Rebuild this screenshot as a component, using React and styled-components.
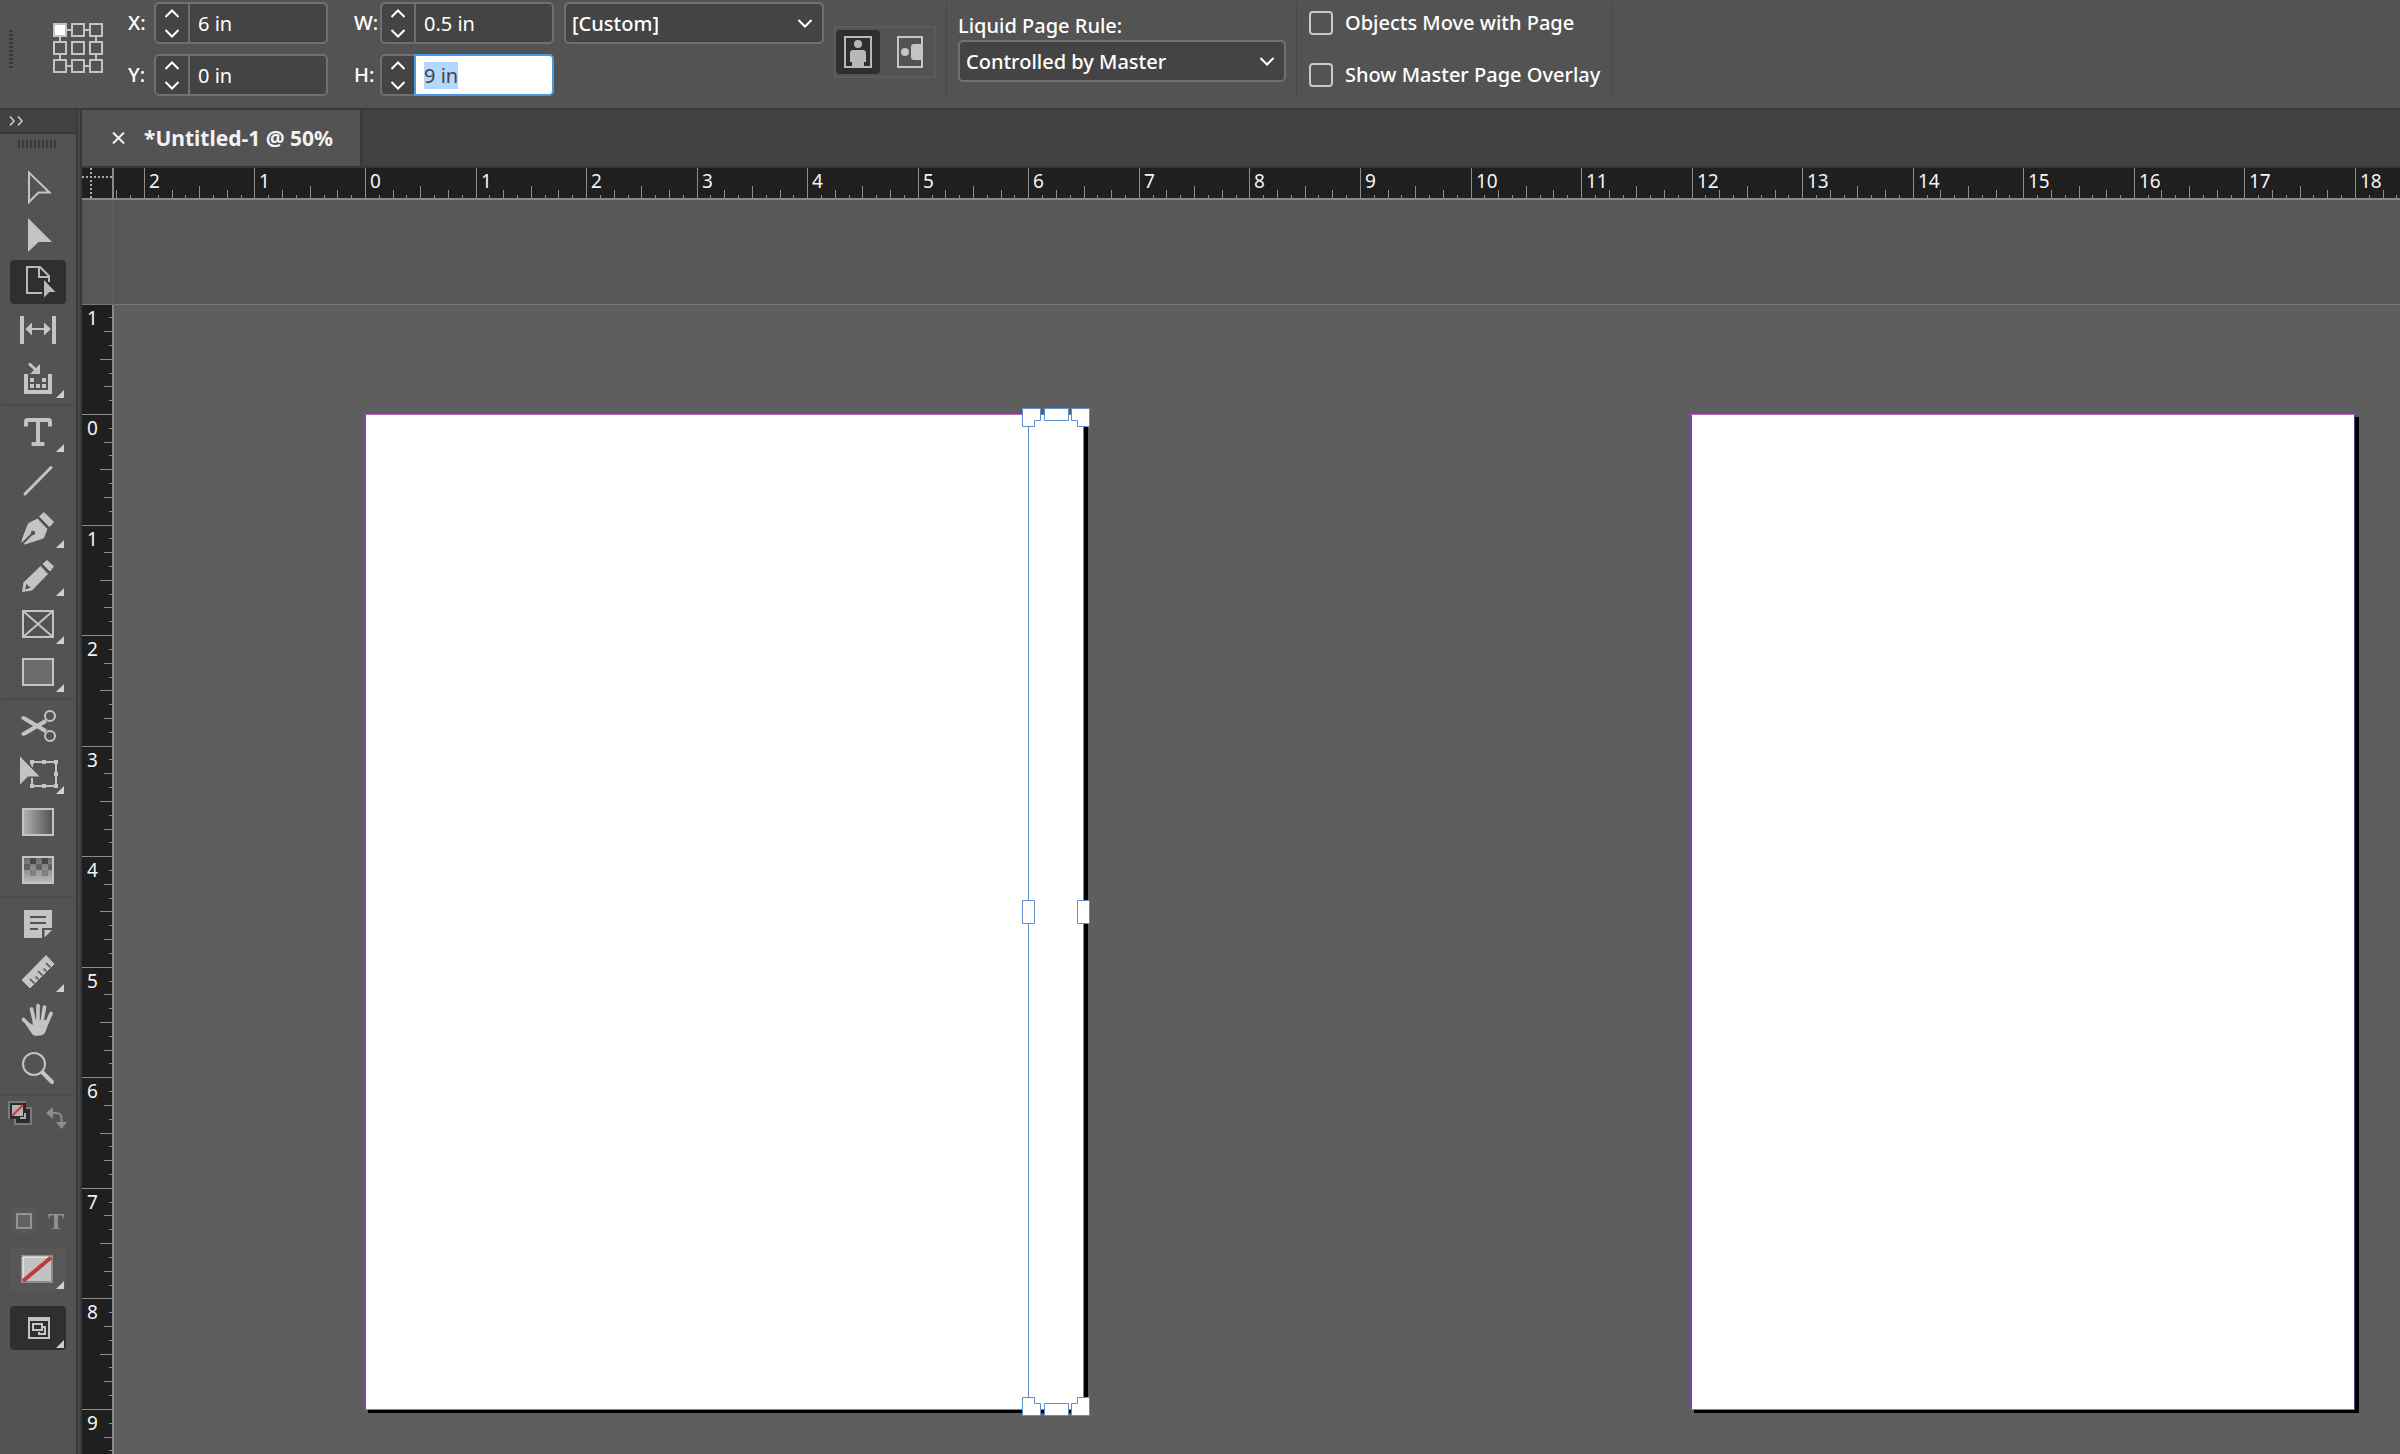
import React, { useEffect, useLayoutEffect, useRef, useState } from 'react';
import styled, { createGlobalStyle, css } from 'styled-components';
import { Type } from 'lucide-react';

const GlobalStyle = createGlobalStyle`
  * {
    box-sizing: border-box;
  }

  body {
    margin: 0;
    background: #535353;
    color: #fff;
    font-family: "Noto Sans", "Open Sans", sans-serif;
    font-size: 20px;
    overflow: hidden;
  }

  button, input, select {
    font: inherit;
    color: inherit;
  }

  button {
    background: none;
    border: none;
    padding: 0;
  }

  svg {
    display: block;
  }
`;

const AppShell = styled.div`
  display: flex;
  flex-direction: column;
  height: 100vh;
`;

/* ---------- control bar ---------- */

const ControlBar = styled.header`
  display: flex;
  align-items: flex-start;
  flex: none;
  height: 110px;
  padding: 2px 0 0 9px;
  background: #535353;
  border-bottom: 2px solid #383838;
`;

const BarGrip = styled.div`
  width: 4px;
  height: 38px;
  margin: 28px 40px 0 0;
  background: repeating-linear-gradient(#3a3a3a 0 2px, transparent 2px 4px);
`;

const ReferencePoint = styled.button`
  margin: 21px 25px 0 0;
`;

const FieldStack = styled.div`
  display: flex;
  flex-direction: column;
  gap: 10px;
  margin-right: ${({ $gap }) => $gap}px;
`;

const Field = styled.div`
  display: flex;
  align-items: center;

  label {
    width: 26px;
    font-weight: 500;
    line-height: 42px;
  }
`;

const NumberBox = styled.div`
  display: flex;
  width: 174px;
  height: 42px;
  background: #444;
  border: 2px solid #707070;
  border-radius: 5px;

  input {
    flex: 1;
    min-width: 0;
    padding: 0 8px;
    background: none;
    border: none;
    border-left: 2px solid #707070;
    outline: none;

    &::selection {
      background: #b3d7ff;
      color: #444;
    }
  }

  ${({ $active }) => $active && css`
    input {
      margin: -2px;
      margin-left: 0;
      background: #fff;
      color: #444;
      border: 2px solid #4a98e4;
      border-radius: 0 5px 5px 0;
    }
  `}
`;

const Stepper = styled.div`
  display: flex;
  flex-direction: column;
  width: 32px;

  button {
    display: flex;
    flex: 1;
    align-items: center;
    justify-content: center;
  }
`;

const SelectBox = styled.div`
  display: flex;
  align-items: center;
  width: ${({ $width }) => $width}px;
  height: 42px;
  background: #444;
  border: 2px solid #707070;
  border-radius: 5px;

  select {
    flex: 1;
    height: 38px;
    padding: 0 6px;
    appearance: none;
    background: none;
    border: none;
    outline: none;
    font-weight: 500;
  }

  svg {
    margin: 0 9px 0 -24px;
    pointer-events: none;
  }
`;

const OrientationGroup = styled.div`
  display: flex;
  gap: 8px;
  width: 102px;
  height: 52px;
  margin: 24px 10px 0;
  border: 2px solid #5b5b5b;
`;

const OrientationButton = styled.button`
  display: flex;
  align-items: center;
  justify-content: center;
  width: 44px;
  height: 44px;
  margin-top: 2px;
  border-radius: 4px;
  background: ${({ $active }) => ($active ? '#2f2f2f' : 'none')};
`;

const BarDivider = styled.div`
  width: 1px;
  height: 94px;
  background: #484848;
`;

const PageRule = styled.div`
  display: flex;
  flex-direction: column;
  margin: 10px 10px 0 11px;

  label {
    font-weight: 500;
    line-height: 28px;
  }
`;

const CheckStack = styled.div`
  display: flex;
  flex-direction: column;
  gap: 24px;
  margin: 7px 12px 0 12px;
`;

const CheckLabel = styled.label`
  display: flex;
  align-items: center;
  gap: 12px;
  font-weight: 500;
  line-height: 28px;

  input {
    width: 24px;
    height: 24px;
    margin: 0;
    appearance: none;
    border: 2px solid #c8c8c8;
    border-radius: 4px;
  }
`;

/* ---------- tool dock ---------- */

const Body = styled.div`
  display: flex;
  flex: 1;
  min-height: 0;
`;

const Dock = styled.aside`
  display: flex;
  flex-direction: column;
  flex: none;
  width: 82px;
  background: #535353;
  border-right: 2px solid #383838;
  box-shadow: inset -2px 0 #494949, inset -4px 0 #3a3a3a;
`;

const DockHeader = styled.button`
  display: flex;
  align-items: center;
  width: 76px;
  height: 24px;
  padding-left: 9px;
  background: #424242;
  border-bottom: 2px solid #383838;
`;

const DockGrip = styled.div`
  width: 38px;
  height: 8px;
  margin: 6px 0 14px 18px;
  background: repeating-linear-gradient(90deg, #3a3a3a 0 2px, transparent 2px 4px);
`;

const ToolGroup = styled.div`
  display: flex;
  flex-direction: column;
  gap: 4px;
  width: 72px;
  margin-left: 2px;
  padding: 2px 8px;
`;

const GroupLine = styled.div`
  width: 72px;
  height: 2px;
  margin: 2px;
  background: #4b4b4b;
`;

const ToolButton = styled.button`
  width: 56px;
  height: 44px;
  border-radius: 4px;
  background: ${({ $bg }) => $bg || 'none'};
`;

const SwatchRow = styled.div`
  display: flex;
  align-items: flex-start;
  gap: 14px;
  padding: 3px 0 0 8px;
`;

const TargetRow = styled.div`
  display: flex;
  gap: 4px;
  margin: 73px 0 13px 10px;
`;

const TargetButton = styled.button`
  display: flex;
  align-items: center;
  justify-content: center;
  width: 28px;
  height: 26px;
  border-radius: 4px;
  background: ${({ $active }) => ($active ? '#565656' : 'none')};
  color: #939393;
  font-family: "Liberation Serif", serif;
  font-size: 24px;
  font-weight: 700;
  line-height: 26px;
`;

const ModeStack = styled.div`
  display: flex;
  flex-direction: column;
  gap: 15px;
  margin-left: 10px;
`;

/* ---------- document ---------- */

const Document = styled.main`
  display: flex;
  flex: 1;
  flex-direction: column;
  min-width: 0;
`;

const TabBar = styled.div`
  display: flex;
  flex: none;
  height: 58px;
  background: #424242;
  border-bottom: 2px solid #383838;
`;

const Tab = styled.div`
  display: flex;
  align-items: center;
  width: 280px;
  padding-left: 30px;
  background: #535353;
  border-right: 2px solid #383838;
  color: #f2f2f2;
  font-size: 21px;
  font-weight: 700;

  button {
    margin-right: 19px;
  }
`;

const Workspace = styled.div`
  display: grid;
  flex: 1;
  grid-template-columns: 32px minmax(0, 1fr);
  grid-template-rows: 32px minmax(0, 1fr);
  min-height: 0;
`;

const RulerCorner = styled.div`
  background: #1f1f1f;
  border-right: 2px solid #888;
  border-bottom: 2px solid #888;
`;

const TopRuler = styled.div`
  overflow: hidden;
  background: #1f1f1f;
  border-bottom: 2px solid #888;
`;

const SideRuler = styled.div`
  display: flex;
  flex-direction: column;
  overflow: hidden;
`;

const SideRulerBlank = styled.div`
  flex: none;
  height: 105px;
  background: #575757;
  border-right: 2px solid #5e5e5e;
  border-bottom: 1px solid #757575;
`;

const SideRulerScale = styled.div`
  flex: 1;
  min-height: 0;
  background: #1f1f1f;
  border-right: 2px solid #888;
`;

const RulerSvg = styled.svg`
  width: 100%;
  height: 100%;

  rect {
    fill: #8c8c8c;
  }

  text {
    fill: #f4f4f4;
    font-size: 19px;
  }
`;

const Canvas = styled.div`
  position: relative;
  overflow: hidden;
  background: #5e5e5e;
`;

const PasteboardEdge = styled.div`
  height: 105px;
  background: #575757;
  border-bottom: 1px solid #757575;
`;

const Sheet = styled.div`
  position: absolute;
  top: 214px;
  left: ${({ $x }) => $x}px;
  width: ${({ $width }) => $width}px;
  height: 996px;
  background: #fff;
  border: solid;
  border-width: 1px 1px 1px 2px;
  border-color: #c060c4 #5a3a9c #c060c4 #7c46a2;
  box-shadow: 4px 3px 0 #000;
`;

const SelectedPage = styled.div`
  position: absolute;
  top: 208px;
  left: 908px;
`;

const ICON = '#c4c4c4';
const PANEL = '#535353';
const INCH = 110.55;

function Chevron({ up, width = 16 }) {
  return (
    <svg width={width} height="10" viewBox="0 0 16 10" fill="none" stroke="#fff" strokeWidth="2">
      <path d={up ? 'M1.5 8 8 1.5 14.5 8' : 'M1.5 2 8 8.5 14.5 2'} />
    </svg>
  );
}

function NumberField({ id, label, value, active, inputRef }) {
  return (
    <Field>
      <label htmlFor={id}>{label}</label>
      <NumberBox $active={active}>
        <Stepper>
          <button type="button" aria-label={`Increase ${label}`}><Chevron up /></button>
          <button type="button" aria-label={`Decrease ${label}`}><Chevron /></button>
        </Stepper>
        <input id={id} ref={inputRef} type="text" defaultValue={value} />
      </NumberBox>
    </Field>
  );
}

function ReferenceGrid() {
  const stops = [1, 19, 37];
  return (
    <svg width="50" height="50" viewBox="0 0 50 50" fill="none" stroke={ICON} strokeWidth="2">
      <path d="M7 7H43V43H7Z" />
      {stops.map(y => stops.map(x => (
        <rect
          key={`${x}-${y}`}
          x={x}
          y={y}
          width="12"
          height="12"
          fill={x === 1 && y === 1 ? '#fff' : PANEL}
        />
      )))}
    </svg>
  );
}

// Ticks fall on every eighth of an inch, longer at quarters and halves
function buildTicks(origin, extent) {
  const step = INCH / 8;
  const first = Math.ceil(-origin / step);
  const last = Math.floor((extent - origin) / step);
  const ticks = [];
  for (let i = first; i <= last; i++) {
    const at = Math.floor(origin + i * step);
    let length = 3;
    if (i % 8 === 0) length = 30;
    else if (i % 4 === 0) length = 12;
    else if (i % 2 === 0) length = 8;
    // a number needs about 28px of room before the ruler ends
    const label = i % 8 === 0 && at < extent - 28 ? Math.abs(i / 8) : null;
    ticks.push({ i, length, at, label });
  }
  return ticks;
}

function useElementSize() {
  const ref = useRef(null);
  const [size, setSize] = useState({ width: 0, height: 0 });

  useLayoutEffect(() => {
    const measure = () => {
      const { width, height } = ref.current.getBoundingClientRect();
      setSize({ width, height });
    };
    measure();
    window.addEventListener('resize', measure);
    return () => window.removeEventListener('resize', measure);
  }, []);

  return [ref, size];
}

function HorizontalRuler() {
  const [ref, { width }] = useElementSize();
  return (
    <RulerSvg ref={ref}>
      {buildTicks(251.5, width).map(({ i, length, at, label }) => (
        <g key={i}>
          <rect x={at} y={30 - length} width="1" height={length} />
          {label !== null && <text x={at + 5} y="20">{label}</text>}
        </g>
      ))}
    </RulerSvg>
  );
}

function VerticalRuler() {
  const [ref, { height }] = useElementSize();
  return (
    <RulerSvg ref={ref}>
      {buildTicks(109.5, height).map(({ i, length, at, label }) => (
        <g key={i}>
          <rect x={30 - length} y={at} width={length} height="1" />
          {label !== null && <text x="5" y={at + 21}>{label}</text>}
        </g>
      ))}
      {/* the spread above starts one inch up, just under the pasteboard edge */}
      <text x="5" y="20">1</text>
    </RulerSvg>
  );
}

const toolGroups = [
  [
    {
      name: 'Selection',
      art: <path d="M19 8.500V38L28.500 28.500H39.500Z" fill="none" stroke={ICON} strokeWidth="2" />,
    },
    { name: 'Direct Selection', art: <path d="M18 6 42 30H28.500L18 40Z" /> },
    {
      name: 'Page',
      active: true,
      art: (
        <>
          <path d="M32 33H17V7H30L39 16V22M29 7V17H39" fill="none" stroke="#b8b8b8" strokeWidth="2" />
          <path d="M34 20 45.500 32H39.500L34 37.500Z" />
        </>
      ),
    },
    {
      name: 'Gap',
      art: (
        <>
          <path d="M10 8H14V36H10ZM42 8H46V36H42Z" />
          <path d="M15.500 21 22 14.500V20H34V14.500L41 21 34 27.500V22H22V27.500Z" />
        </>
      ),
    },
    {
      name: 'Content Collector',
      more: true,
      art: (
        <>
          <path d="M14 18H18V34H38V18H42V38H14Z" />
          <path d="M20 22h4v4h-4zM32 22h4v4h-4zM20 28h4v4h-4zM26 28h4v4h-4zM32 28h4v4h-4z" />
          <path d="M19 7.500 27 15" stroke={ICON} strokeWidth="3" />
          <path d="M30 8V18H20Z" />
        </>
      ),
    },
  ],
  [
    {
      name: 'Type',
      more: true,
      art: (
        <Type
          x={10}
          y={4}
          size={36}
          color={ICON}
          strokeWidth={2.6}
          strokeLinecap="square"
          strokeLinejoin="miter"
        />
      ),
    },
    {
      name: 'Line',
      art: <path d="M15 36 41 9.500" stroke={ICON} strokeWidth="3" strokeLinecap="round" />,
    },
    {
      name: 'Pen',
      more: true,
      art: (
        <>
          <path d="M34 6.500 43.500 16 39.500 20.500 29.500 10.500Z" stroke={ICON} strokeLinejoin="round" />
          <path d="M27.500 13 37 23 33.500 32 15 38 12 37 12.500 33 18.500 17.500Z" stroke={ICON} strokeLinejoin="round" />
          <path d="M12 38 22 28" stroke={PANEL} strokeWidth="2" />
          <circle cx="23" cy="27" r="2.200" fill={PANEL} />
        </>
      ),
    },
    {
      name: 'Pencil',
      more: true,
      art: (
        <>
          <path d="M37 6.500 43.500 12.500 40 17 33 10Z" stroke={ICON} strokeLinejoin="round" />
          <path d="M30.500 12 38 20 22 36.500 12 38 13.500 28.500Z" />
          <path d="M15 35.500 16.500 29.500 18.500 32 21 33.500Z" fill={PANEL} />
        </>
      ),
    },
    {
      name: 'Rectangle Frame',
      more: true,
      art: <path d="M13 9H43V35H13ZL43 35M43 9 13 35" fill="none" stroke={ICON} strokeWidth="2" />,
    },
    {
      name: 'Rectangle',
      more: true,
      art: <rect x="13" y="9" width="30" height="26" fill="#6d6d6d" stroke={ICON} strokeWidth="2" />,
    },
  ],
  [
    {
      name: 'Scissors',
      art: (
        <>
          <g fill="none" stroke={ICON} strokeWidth="2">
            <circle cx="40" cy="12" r="5" />
            <circle cx="40" cy="32" r="5" />
          </g>
          <path d="M11 14C12 12 14 12 16 13L37 25.500 35 29 13 16Z" />
          <path d="M11 30C12 32 14 32 16 31L37 18.500 35 15 13 28Z" />
        </>
      ),
    },
    {
      name: 'Free Transform',
      more: true,
      art: (
        <>
          <path d="M22 10H46V34H22Z" fill="none" stroke={ICON} strokeWidth="2" />
          <path d="M20 8h4v4h-4zM32 8h4v4h-4zM44 8h4v4h-4zM44 20h4v4h-4zM20 32h4v4h-4zM32 32h4v4h-4zM44 32h4v4h-4z" />
          <path d="M10 4.500 29.500 24.500H18L10 32.500Z" stroke={PANEL} strokeWidth="3" paintOrder="stroke" />
        </>
      ),
    },
    {
      name: 'Gradient Swatch',
      art: (
        <>
          <defs>
            <linearGradient id="swatch">
              <stop offset="0" stopColor="#b4b4b4" />
              <stop offset="1" stopColor="#505050" />
            </linearGradient>
          </defs>
          <rect x="13" y="9" width="30" height="26" fill="url(#swatch)" stroke={ICON} strokeWidth="2" />
        </>
      ),
    },
    {
      name: 'Gradient Feather',
      art: (
        <>
          <defs>
            <linearGradient id="feather" x2="0" y2="1">
              <stop offset="0" stopColor="#686868" />
              <stop offset="1" stopColor="#bcbcbc" />
            </linearGradient>
          </defs>
          <rect x="13" y="9" width="30" height="26" fill="url(#feather)" stroke={ICON} strokeWidth="2" />
          <path d="M20 10h6v6h-6zM32 10h6v6h-6z" fill="#484848" />
          <path d="M14 16h6v6h-6zM26 16h6v6h-6zM38 16h4v6h-4z" fill="#626262" />
          <path d="M20 22h6v6h-6zM32 22h6v6h-6z" fill="#808080" />
        </>
      ),
    },
  ],
  [
    {
      name: 'Note',
      art: (
        <>
          <path d="M14 8H42V26H32V36H14Z" />
          <path d="M20 14H36V16H20ZM20 20H36V22H20ZM20 26H28V28H20Z" fill={PANEL} />
          <path d="M34.500 28H42L34.500 35.500Z" />
        </>
      ),
    },
    {
      name: 'Measure',
      more: true,
      art: (
        <>
          <path d="M36 5.500 44 14 20 38 12 30Z" stroke={ICON} strokeLinejoin="round" />
          <path d="M40.500 17.500 36 13M36.500 21.500 33.500 18.500M32.500 25.500 28 21M28.500 29.500 25.500 26.500M24.500 33.500 20 29" stroke={PANEL} strokeWidth="1.600" />
        </>
      ),
    },
    {
      name: 'Hand',
      art: (
        <>
          <path d="M21.500 11 24.500 24M28 7.500V24M34.500 9 32 24M41 15.500 36 27M13.500 21.500 21 29" stroke={ICON} strokeWidth="3.600" strokeLinecap="round" />
          <path d="M23 22H36L38.500 24C37 30 36 33 34.500 35.500 33 38 24 38.500 22.500 36.500L15 25.500 18 24 22.500 27Z" />
        </>
      ),
    },
    {
      name: 'Zoom',
      art: (
        <g fill="none" stroke={ICON}>
          <circle cx="24" cy="18" r="11" strokeWidth="2" />
          <path d="M32.500 26.500 42 36" strokeWidth="4" strokeLinecap="round" />
        </g>
      ),
    },
  ],
];

function Tool({ name, art, more, active, bg }) {
  return (
    <ToolButton type="button" aria-label={name} $bg={active ? '#2f2f2f' : bg}>
      <svg width="56" height="44" viewBox="0 0 56 44" fill={active ? '#b8b8b8' : ICON}>
        {art}
        {more && <path d="M54 34V42H46Z" fill="#d0d0d0" />}
      </svg>
    </ToolButton>
  );
}

function FillStroke() {
  return (
    <SwatchRow>
      <button type="button" aria-label="Default fill and stroke">
        <svg width="24" height="24" viewBox="0 0 24 24">
          <rect x="6" y="6" width="18" height="18" fill="#7b7b7b" />
          <rect x="8" y="8" width="14" height="14" fill="#2b2b2b" />
          <rect width="18" height="18" fill="#7b7b7b" />
          <rect x="2" y="2" width="16" height="16" fill="#2b2b2b" />
          <rect x="4" y="4" width="11" height="11" fill="#b4b4b4" />
          <path d="M4 15 15 4" stroke="#c23b3b" strokeWidth="2" />
          <path d="M17 12V17H12" fill="none" stroke="#aaa" strokeWidth="2" />
        </svg>
      </button>
      <button type="button" aria-label="Swap fill and stroke">
        <svg width="22" height="34" viewBox="0 0 22 34" fill="#8c8c8c">
          <path d="M5 12H10Q15.500 12 15.500 18V21" fill="none" stroke="#8c8c8c" strokeWidth="2" />
          <path d="M0 12 7 6V18ZM10 21H21L15.500 28Z" />
        </svg>
      </button>
    </SwatchRow>
  );
}

const noneSwatch = (
  <>
    <rect x="12" y="9" width="30" height="26" fill="#c2c2c2" stroke="#8e8e8e" strokeWidth="2" />
    <path d="M13 34V10H41" fill="none" stroke="#fff" />
    <path d="M13 34 41 10.500" stroke="#c23b3b" strokeWidth="4" />
  </>
);

const screenMode = (
  <g fill="none" stroke="#c4c4c4" strokeWidth="2">
    <rect x="19" y="12" width="20" height="20" />
    <path d="M18 13H40" strokeWidth="4" />
    <path d="M29 26V28H35V21H32" />
    <rect x="23" y="18" width="9" height="6" fill="#2f2f2f" />
  </g>
);

function SelectionOverlay() {
  return (
    <SelectedPage>
      <svg width="68" height="1008" viewBox="0 0 68 1008" fill="#fff" stroke="#5b8fcc">
        <path d="M6.500 6.500H61.500V1001.500H6.500Z" fill="none" />
        <path d="M.5.5H18.500V12.500H12.500V18.500H.5Z" />
        <path d="M22.500.5H46.500V12.500H22.500Z" />
        <path d="M49.500.5H67.500V18.500H55.500V12.500H49.500Z" />
        <path d="M.5 492.500H12.500V515.500H.5Z" />
        <path d="M55.500 492.500H67.500V515.500H55.500Z" />
        <path d="M.5 1007.500H18.500V995.500H12.500V989.500H.5Z" />
        <path d="M22.500 995.500H46.500V1007.500H22.500Z" />
        <path d="M49.500 1007.500H67.500V989.500H55.500V995.500H49.500Z" />
      </svg>
    </SelectedPage>
  );
}

function App() {
  const heightRef = useRef(null);

  // The height field starts focused with its value selected
  useEffect(() => {
    heightRef.current.focus();
    heightRef.current.select();
  }, []);

  return (
    <>
      <GlobalStyle />
      <AppShell>
        <ControlBar>
          <BarGrip />
          <ReferencePoint type="button" aria-label="Reference point">
            <ReferenceGrid />
          </ReferencePoint>
          <FieldStack $gap={26}>
            <NumberField id="page-x" label="X:" value="6 in" />
            <NumberField id="page-y" label="Y:" value="0 in" />
          </FieldStack>
          <FieldStack $gap={10}>
            <NumberField id="page-w" label="W:" value="0.5 in" />
            <NumberField id="page-h" label="H:" value="9 in" active inputRef={heightRef} />
          </FieldStack>
          <SelectBox $width={260}>
            <select aria-label="Page size" defaultValue="custom">
              <option value="custom">[Custom]</option>
            </select>
            <Chevron />
          </SelectBox>
          <OrientationGroup>
            <OrientationButton type="button" aria-label="Portrait" $active>
              <svg width="28" height="32" viewBox="0 0 28 32" fill="#b8b8b8">
                <rect x="1" y="1" width="26" height="30" fill="none" stroke="#b8b8b8" strokeWidth="2" />
                <circle cx="14" cy="8" r="4" />
                <path d="M6 17Q6 14 9 14H19Q22 14 22 17V26H20V31H8V26H6Z" />
              </svg>
            </OrientationButton>
            <OrientationButton type="button" aria-label="Landscape">
              <svg width="26" height="32" viewBox="0 0 26 32" fill={ICON}>
                <rect x="1" y="1" width="24" height="30" fill="none" stroke={ICON} strokeWidth="2" />
                <circle cx="8" cy="16" r="4" />
                <path d="M25 8H17Q14 8 14 11V21Q14 24 17 24H25Z" />
              </svg>
            </OrientationButton>
          </OrientationGroup>
          <BarDivider />
          <PageRule>
            <label htmlFor="page-rule">Liquid Page Rule:</label>
            <SelectBox $width={328}>
              <select id="page-rule" defaultValue="master">
                <option value="master">Controlled by Master</option>
              </select>
              <Chevron />
            </SelectBox>
          </PageRule>
          <BarDivider />
          <CheckStack>
            <CheckLabel>
              <input type="checkbox" />
              Objects Move with Page
            </CheckLabel>
            <CheckLabel>
              <input type="checkbox" />
              Show Master Page Overlay
            </CheckLabel>
          </CheckStack>
          <BarDivider />
        </ControlBar>

        <Body>
          <Dock>
            <DockHeader type="button" aria-label="Expand panel">
              <svg width="14" height="10" viewBox="0 0 14 10" fill="none" stroke="#d0d0d0" strokeWidth="1.500">
                <path d="M1 .5 5 5 1 9.500M9 .5 13 5 9 9.500" />
              </svg>
            </DockHeader>
            <DockGrip />
            {toolGroups.map((group, index) => (
              <React.Fragment key={index}>
                <ToolGroup>
                  {group.map(tool => <Tool key={tool.name} {...tool} />)}
                </ToolGroup>
                <GroupLine />
              </React.Fragment>
            ))}
            <FillStroke />
            <TargetRow>
              <TargetButton type="button" aria-label="Formatting affects container" $active>
                <svg width="16" height="16" viewBox="0 0 16 16">
                  <rect x="1" y="1" width="14" height="14" fill="#626262" stroke="#939393" strokeWidth="2" />
                </svg>
              </TargetButton>
              <TargetButton type="button">T</TargetButton>
            </TargetRow>
            <ModeStack>
              <Tool name="Apply None" bg="#575757" art={noneSwatch} more />
              <Tool name="Screen Mode" art={screenMode} active more />
            </ModeStack>
          </Dock>

          <Document>
            <TabBar>
              <Tab>
                <button type="button" aria-label="Close document">
                  <svg width="13" height="12" viewBox="0 0 13 12" stroke="#f2f2f2" strokeWidth="2">
                    <path d="M1 .5 12 11.500M12 .5 1 11.500" />
                  </svg>
                </button>
                *Untitled-1 @ 50%
              </Tab>
            </TabBar>
            <Workspace>
              <RulerCorner>
                <svg width="30" height="30" viewBox="0 0 30 30" stroke="#aaa" strokeWidth="2" strokeDasharray="2 2">
                  <path d="M9 0V30M0 9H30" />
                </svg>
              </RulerCorner>
              <TopRuler>
                <HorizontalRuler />
              </TopRuler>
              <SideRuler>
                <SideRulerBlank />
                <SideRulerScale>
                  <VerticalRuler />
                </SideRulerScale>
              </SideRuler>
              <Canvas>
                <PasteboardEdge />
                <Sheet $x={250} $width={720} />
                <Sheet $x={1576} $width={665} />
                <SelectionOverlay />
              </Canvas>
            </Workspace>
          </Document>
        </Body>
      </AppShell>
    </>
  );
}

export default App;
